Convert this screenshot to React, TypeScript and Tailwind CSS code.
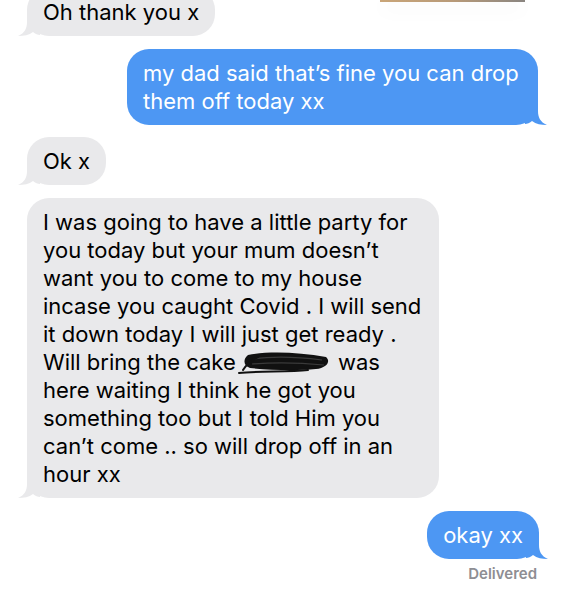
import React from 'react';

const GRAY = 'bg-[#e9e9eb]';

function LeftTail() {
  return (
    <svg className="absolute bottom-0 left-[-9px]" width="22" height="22" viewBox="0 0 22 22">
      <path d="M22 0 H9 V8 C9 14 7 19 0 22 C6 22 11 21 15 18 C17 20 20 21 22 21 Z" fill="#e9e9eb" />
    </svg>
  );
}

function RightTail() {
  return (
    <svg className="absolute bottom-0 right-[-9px]" width="22" height="22" viewBox="0 0 22 22">
      <path d="M0 0 H13 V8 C13 14 15 19 22 22 C16 22 11 21 7 18 C5 20 2 21 0 21 Z" fill="#4d97f3" />
    </svg>
  );
}

function Received({ children, className = '' }: { children: React.ReactNode; className?: string }) {
  return (
    <div className={`relative rounded-[22px] ${GRAY} px-[16px] py-[10px] ${className}`}>
      <LeftTail />
      <div className="relative">{children}</div>
    </div>
  );
}

function Sent({ children, className = '' }: { children: React.ReactNode; className?: string }) {
  return (
    <div className={`relative rounded-[22px] bg-[#4d97f3] px-[16px] py-[10px] text-white ${className}`}>
      <RightTail />
      <div className="relative">{children}</div>
    </div>
  );
}

// name scribbled out in the original screenshot
function Scribble() {
  return (
    <svg className="ml-[2px] inline-block align-[-6px]" width="94" height="26" viewBox="0 0 94 26">
      <path d="M10 5 C30 1 60 2 88 7 C93 11 89 18 78 19 C58 21 30 20 12 18 C5 16 5 9 10 5 Z" fill="#111" />
      <path d="M16 9 C35 6 60 7 84 10 M14 14 C40 12 65 13 86 15" stroke="#3a3a3a" strokeWidth="1.2" fill="none" />
      <path d="M1 23 C20 21 50 22 70 20 M5 20 C8 15 12 11 20 7" stroke="#111" strokeWidth="2" fill="none" strokeLinecap="round" />
    </svg>
  );
}

export default function App() {
  return (
    <div className="h-[600px] w-[566px] overflow-hidden bg-white font-['Inter',sans-serif] text-[22px] leading-[28px] text-black">
      <div className="flex items-start justify-between">
        <Received className="ml-[27px] mt-[-12px]">Oh thank you x</Received>
        <div className="mr-[41px] h-[2px] w-[145px] bg-gradient-to-r from-[#c9a578] via-[#b89a78] to-[#8a8580] shadow-[0_6px_20px_rgba(0,0,0,0.12)]" />
      </div>

      <div className="mt-[13px] flex justify-end pr-[28px]">
        <Sent className="w-[411px]">
          my dad said that’s fine you can drop
          <br />
          them off today xx
        </Sent>
      </div>

      <div className="mt-[12px] flex">
        <Received className="ml-[27px]">Ok x</Received>
      </div>

      <div className="mt-[13px] flex">
        <Received className="ml-[27px] w-[412px] whitespace-nowrap">
          I was going to have a little party for
          <br />
          you today but your mum doesn’t
          <br />
          want you to come to my house
          <br />
          incase you caught Covid . I will send
          <br />
          it down today I will just get ready .
          <br />
          Will bring the cake<Scribble /> was
          <br />
          here waiting I think he got you
          <br />
          something too but I told Him you
          <br />
          can’t come .. so will drop off in an
          <br />
          hour xx
        </Received>
      </div>

      <div className="mt-[13px] flex justify-end pr-[27px]">
        <Sent>okay xx</Sent>
      </div>

      <div className="mt-[5px] flex justify-end pr-[29px]">
        <span className="text-[15px] font-semibold leading-[20px] text-[#8e8e93]">Delivered</span>
      </div>
    </div>
  );
}
